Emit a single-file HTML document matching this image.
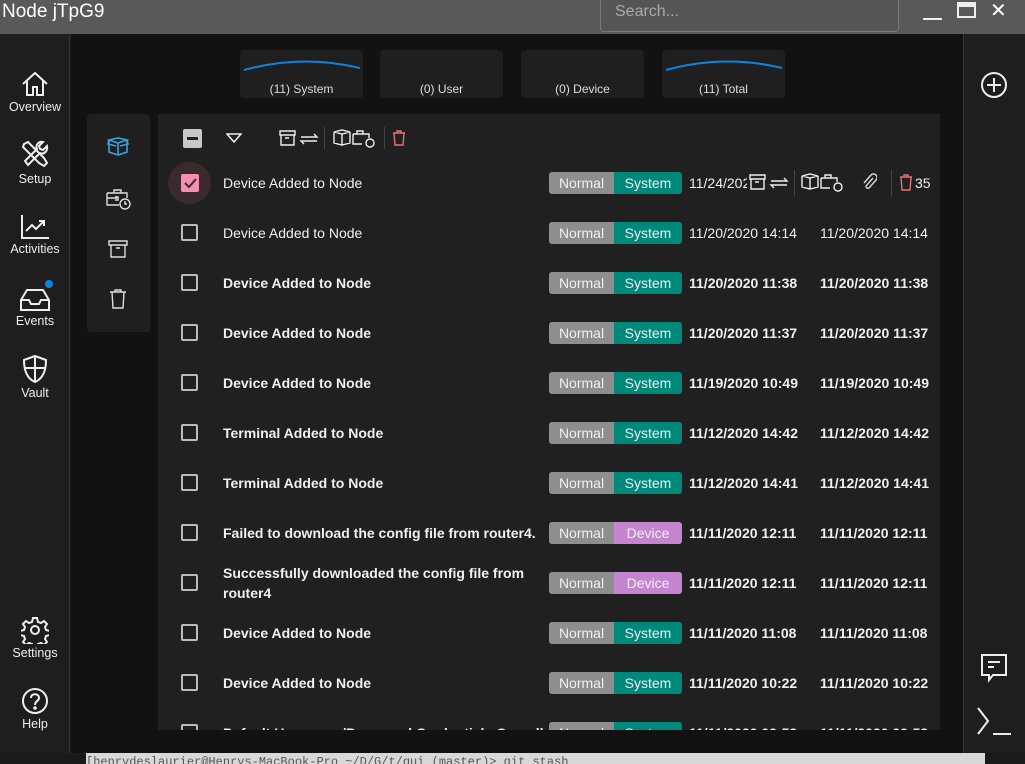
<!DOCTYPE html>
<html><head><meta charset="utf-8"><style>
*{margin:0;padding:0;box-sizing:border-box}
body{width:1025px;height:764px;overflow:hidden;background:#1a1a1a;font-family:"Liberation Sans",sans-serif;color:#eee;position:relative}
.abs{position:absolute}
#title{left:0;top:0;width:1025px;height:34px;background:#595959}
#title .t{left:2px;top:1px;font-size:19px;color:#fff}
#search{left:600px;top:-4px;width:299px;height:36px;border:1px solid #7a7a7a;border-radius:4px;background:#555}
#search span{position:absolute;left:14px;top:6px;font-size:16px;color:#aaa}
#left{left:0;top:34px;width:70px;height:719px;background:#1e1e1e;border-right:1px solid #333}
#main{left:71px;top:34px;width:892px;height:719px;background:#121212}
#right{left:963px;top:34px;width:62px;height:719px;background:#1e1e1e;border-left:1px solid #333}
.nav{position:absolute;left:0;width:70px;text-align:center;font-size:12.5px;color:#eee}
.nav svg{display:block;margin:0 auto 2px}
.card{position:absolute;top:50px;width:123px;height:48px;background:#1f1f1f;border-radius:4px;font-size:12px;color:#ddd;text-align:center}
.card span{position:absolute;left:0;right:0;top:32px}
#lp{left:87px;top:114px;width:63px;height:218px;background:#1f1f1f;border-radius:4px}
#tbl{left:158px;top:114px;width:782px;height:616px;background:#202020;overflow:hidden}
.row{position:absolute;left:0;width:782px;height:50px}
.cb{position:absolute;left:23px;top:16px;width:17px;height:17px;border:2px solid #bbb;border-radius:2px}
.txt{position:absolute;left:65px;top:0;height:50px;display:flex;align-items:center;width:325px;font-size:14px;line-height:20px;color:#f0f0f0}
.b{font-weight:bold}
.bn{position:absolute;left:391px;top:14px;width:65px;height:22px;background:#8e8e8e;border-radius:3px 0 0 3px;font-size:14px;text-align:center;line-height:22px;color:#f0f0f0}
.bs{position:absolute;left:456px;top:14px;width:68px;height:22px;background:#00897b;border-radius:0 3px 3px 0;font-size:14px;text-align:center;line-height:22px;color:#f0f0f0}
.bd{background:#c584d0}
.d1,.d2{position:absolute;top:0;line-height:50px;font-size:14px;color:#f0f0f0}
.d1{left:531px}.d2{left:662px}
#term{left:86px;top:753px;width:899px;height:11px;background:#d8d8d8;font-family:"Liberation Mono",monospace;font-size:12px;color:#555;overflow:hidden;line-height:11px;white-space:nowrap;padding-top:4px}
</style></head><body>
<div id="title" class="abs"><div class="t abs">Node jTpG9</div>
<div id="search" class="abs"><span>Search...</span></div>
<div class="abs" style="left:923px;top:18px;width:19px;height:2px;background:#eee"></div>
<div class="abs" style="left:957px;top:2px;width:19px;height:16px;border:2px solid #eee;border-top-width:5px"></div>
<div class="abs" style="left:990px;top:-2px;font-size:20px;color:#fff">✕</div>
</div>
<div id="left" class="abs">
<div class="nav" style="top:36px"><svg width="28" height="28" viewBox="0 0 28 28" fill="none" stroke="#eee" stroke-width="2"><path d="M2 14L14 3l12 11M6 11v14h6v-8h4v8h6V11"/></svg>Overview</div>
<div class="nav" style="top:106px"><svg width="28" height="30" viewBox="0 0 28 30" fill="none" stroke="#eee" stroke-width="2"><path d="M3 4l4-2 16 16 3 5-3 3-5-3L2 7zM26 6l-4 4-3-1-1-3 4-4c-4-1-8 3-6 7L4 21l3 4 12-12c4 2 8-2 7-7z"/></svg>Setup</div>
<div class="nav" style="top:180px"><svg width="30" height="26" viewBox="0 0 30 26" fill="none" stroke="#eee" stroke-width="2"><path d="M2 1v23h27M6 17l6-6 4 4 8-8m-5 0h5v5"/></svg>Activities</div>
<div class="nav" style="top:252px"><svg width="32" height="26" viewBox="0 0 32 26" fill="none" stroke="#eee" stroke-width="2"><path d="M2 14l6-10h16l6 10v10H2zM2 14h8l2 4h8l2-4h8"/></svg>Events</div>
<div class="abs" style="left:45px;top:246px;width:8px;height:8px;border-radius:50%;background:#0a84e0"></div>
<div class="nav" style="top:320px"><svg width="28" height="30" viewBox="0 0 28 30" fill="none" stroke="#eee" stroke-width="2"><path d="M14 2l11 4c0 12-4 19-11 22C7 25 3 18 3 6zM14 2v26M4 14h20"/></svg>Vault</div>
<div class="nav" style="top:582px"><svg width="28" height="28" viewBox="0 0 28 28" fill="none" stroke="#eee" stroke-width="2"><circle cx="14" cy="14" r="4"/><path d="M12 2h4l1 4 3 1 3-2 3 3-2 3 1 3 4 1v4l-4 1-1 3 2 3-3 3-3-2-3 1-1 4h-4l-1-4-3-1-3 2-3-3 2-3-1-3-4-1v-4l4-1 1-3-2-3 3-3 3 2 3-1z"/></svg>Settings</div>
<div class="nav" style="top:653px"><svg width="28" height="28" viewBox="0 0 28 28" fill="none" stroke="#eee" stroke-width="2"><circle cx="14" cy="14" r="12"/><path d="M10 11c0-5 8-5 8 0 0 3-4 3-4 7"/><circle cx="14" cy="21" r=".8" fill="#eee"/></svg>Help</div>
</div>
<div id="main" class="abs"></div>
<div class="card" style="left:240px"><svg class="abs" style="left:4px;top:8px" width="116" height="14"><path d="M0 12Q58-4 116 10" stroke="#0a84e0" stroke-width="2" fill="none"/></svg><span>(11) System</span></div>
<div class="card" style="left:380px"><span>(0) User</span></div>
<div class="card" style="left:521px"><span>(0) Device</span></div>
<div class="card" style="left:662px"><svg class="abs" style="left:4px;top:8px" width="116" height="14"><path d="M0 12Q58-4 116 10" stroke="#0a84e0" stroke-width="2" fill="none"/></svg><span>(11) Total</span></div>
<div id="lp" class="abs">
<svg class="abs" style="left:20px;top:22px" width="22" height="20" viewBox="0 0 22 20" fill="none" stroke="#3aa0e0" stroke-width="1.6"><path d="M2 4l9-2 9 2-9 3zM2 4v12l9 3 9-3V4M11 7v12M2 4l-1 4 8 2M20 4l1 4-8 2"/></svg>
<svg class="abs" style="left:19px;top:74px" width="26" height="22" viewBox="0 0 26 22" fill="none" stroke="#ddd" stroke-width="1.4"><path d="M8 5V2h7v3M1 5h20v5M1 5v12h12M1 10h10M9 9h3v3H9"/><circle cx="19" cy="16" r="5"/><path d="M19 13v3h2"/></svg>
<svg class="abs" style="left:21px;top:126px" width="20" height="18" viewBox="0 0 20 18" fill="none" stroke="#ddd" stroke-width="1.4"><path d="M1 1h18v4H1zM3 5v12h14V5M8 8h4"/></svg>
<svg class="abs" style="left:22px;top:175px" width="18" height="20" viewBox="0 0 18 20" fill="none" stroke="#ddd" stroke-width="1.4"><path d="M1 3h16M6 3V1h6v2M3 3l1 16h10l1-16"/></svg>
</div>
<div id="tbl" class="abs">
<div class="abs" style="left:25px;top:15px;width:19px;height:19px;background:#c8c8c8;border-radius:2px"><div class="abs" style="left:4px;top:8px;width:11px;height:3px;background:#222"></div></div>
<svg class="abs" style="left:68px;top:19px" width="16" height="10"><path d="M1 1h14L8 9z" stroke="#eee" stroke-width="1.5" fill="none"/></svg>
<svg class="abs" style="left:121px;top:15px" width="42" height="18" viewBox="0 0 42 18" fill="none" stroke="#eee" stroke-width="1.4"><path d="M1 2h15v4H1zM2 6v10h13V6M6 9h4M22 8h16l-3-3M38 12H22l3 3"/></svg>
<div class="abs" style="left:166px;top:13px;width:1px;height:22px;background:#444"></div>
<svg class="abs" style="left:175px;top:15px" width="46" height="20" viewBox="0 0 46 20" fill="none" stroke="#eee" stroke-width="1.4"><path d="M1 3l8-2 8 2-8 2zM1 3v11l8 2 8-2V3M9 5v11M24 5V2h6v3M20 5h16v4M20 5v10h9"/><circle cx="37" cy="14" r="4"/></svg>
<div class="abs" style="left:226px;top:13px;width:1px;height:22px;background:#444"></div>
<svg class="abs" style="left:234px;top:16px" width="14" height="16" viewBox="0 0 14 16" fill="none" stroke="#e57373" stroke-width="1.4"><path d="M1 3h12M5 3V1h4v2M2 3l1 12h8l1-12"/></svg>

<div class="row" style="top:44px"><div class="abs" style="left:10px;top:4px;width:43px;height:42px;border-radius:50%;background:#3a2a2e"></div><div class="abs" style="left:23px;top:16px;width:18px;height:18px;background:#f48fb1;border-radius:2px"><svg width="18" height="18"><path d="M4 9l4 4 7-8" stroke="#333" stroke-width="2" fill="none"/></svg></div><div class="txt">Device Added to Node</div><div class="bn">Normal</div><div class="bs">System</div><div class="d1" style="width:58px;overflow:hidden;white-space:nowrap">11/24/2020</div>
<svg class="abs" style="left:591px;top:15px" width="42" height="18" viewBox="0 0 42 18" fill="none" stroke="#eee" stroke-width="1.4"><path d="M1 2h15v4H1zM2 6v10h13V6M6 9h4M22 8h16l-3-3M38 12H22l3 3"/></svg>
<div class="abs" style="left:636px;top:12px;width:1px;height:26px;background:#444"></div>
<svg class="abs" style="left:643px;top:15px" width="46" height="20" viewBox="0 0 46 20" fill="none" stroke="#eee" stroke-width="1.4"><path d="M1 3l8-2 8 2-8 2zM1 3v11l8 2 8-2V3M9 5v11M24 5V2h6v3M20 5h16v4M20 5v10h9"/><circle cx="37" cy="14" r="4"/></svg>
<svg class="abs" style="left:703px;top:15px" width="16" height="18" viewBox="0 0 16 18" fill="none" stroke="#ddd" stroke-width="1.4"><path d="M12 5l-7 8a2 2 0 0 0 3 2l7-8a3.5 3.5 0 0 0-5-5L3 10"/></svg>
<div class="abs" style="left:733px;top:12px;width:1px;height:26px;background:#444"></div>
<svg class="abs" style="left:741px;top:16px" width="14" height="17" viewBox="0 0 14 17" fill="none" stroke="#e57373" stroke-width="1.4"><path d="M1 3h12M5 3V1h4v2M2 3l1 13h8l1-13"/></svg>
<div class="abs" style="left:757px;top:0;line-height:50px;font-size:14px">35</div></div>

<div class="row" style="top:94px"><div class="cb"></div><div class="txt">Device Added to Node</div><div class="bn">Normal</div><div class="bs">System</div><div class="d1">11/20/2020 14:14</div><div class="d2">11/20/2020 14:14</div></div>
<div class="row" style="top:144px"><div class="cb"></div><div class="txt b">Device Added to Node</div><div class="bn">Normal</div><div class="bs">System</div><div class="d1 b">11/20/2020 11:38</div><div class="d2 b">11/20/2020 11:38</div></div>
<div class="row" style="top:194px"><div class="cb"></div><div class="txt b">Device Added to Node</div><div class="bn">Normal</div><div class="bs">System</div><div class="d1 b">11/20/2020 11:37</div><div class="d2 b">11/20/2020 11:37</div></div>
<div class="row" style="top:244px"><div class="cb"></div><div class="txt b">Device Added to Node</div><div class="bn">Normal</div><div class="bs">System</div><div class="d1 b">11/19/2020 10:49</div><div class="d2 b">11/19/2020 10:49</div></div>
<div class="row" style="top:294px"><div class="cb"></div><div class="txt b">Terminal Added to Node</div><div class="bn">Normal</div><div class="bs">System</div><div class="d1 b">11/12/2020 14:42</div><div class="d2 b">11/12/2020 14:42</div></div>
<div class="row" style="top:344px"><div class="cb"></div><div class="txt b">Terminal Added to Node</div><div class="bn">Normal</div><div class="bs">System</div><div class="d1 b">11/12/2020 14:41</div><div class="d2 b">11/12/2020 14:41</div></div>
<div class="row" style="top:394px"><div class="cb"></div><div class="txt b">Failed to download the config file from router4.</div><div class="bn">Normal</div><div class="bs bd">Device</div><div class="d1 b">11/11/2020 12:11</div><div class="d2 b">11/11/2020 12:11</div></div>
<div class="row" style="top:444px"><div class="cb"></div><div class="txt b">Successfully downloaded the config file from router4</div><div class="bn">Normal</div><div class="bs bd">Device</div><div class="d1 b">11/11/2020 12:11</div><div class="d2 b">11/11/2020 12:11</div></div>
<div class="row" style="top:494px"><div class="cb"></div><div class="txt b">Device Added to Node</div><div class="bn">Normal</div><div class="bs">System</div><div class="d1 b">11/11/2020 11:08</div><div class="d2 b">11/11/2020 11:08</div></div>
<div class="row" style="top:544px"><div class="cb"></div><div class="txt b">Device Added to Node</div><div class="bn">Normal</div><div class="bs">System</div><div class="d1 b">11/11/2020 10:22</div><div class="d2 b">11/11/2020 10:22</div></div>
<div class="row" style="top:594px"><div class="cb"></div><div class="txt b">Default Username/Password Credentials Overall</div><div class="bn">Normal</div><div class="bs">System</div><div class="d1 b">11/11/2020 09:53</div><div class="d2 b">11/11/2020 09:53</div></div>
</div>
<div id="right" class="abs">
<svg class="abs" style="left:15px;top:36px" width="30" height="30" viewBox="0 0 30 30" fill="none" stroke="#eee" stroke-width="2"><circle cx="15" cy="15" r="12"/><path d="M15 8v14M8 15h14"/></svg>
<svg class="abs" style="left:15px;top:618px" width="30" height="32" viewBox="0 0 30 32" fill="none" stroke="#eee" stroke-width="2"><path d="M3 3h24v20H14l-4 5v-5H3zM9 10h12M9 15h6"/></svg>
<svg class="abs" style="left:11px;top:672px" width="40" height="30" viewBox="0 0 40 30" fill="none" stroke="#eee" stroke-width="2"><path d="M3 2l10 13L3 28M18 28h18"/></svg>
</div>
<div id="term" class="abs">[henrydeslaurier@Henrys-MacBook-Pro ~/D/G/t/gui (master)&gt; git stash</div>
</body></html>
